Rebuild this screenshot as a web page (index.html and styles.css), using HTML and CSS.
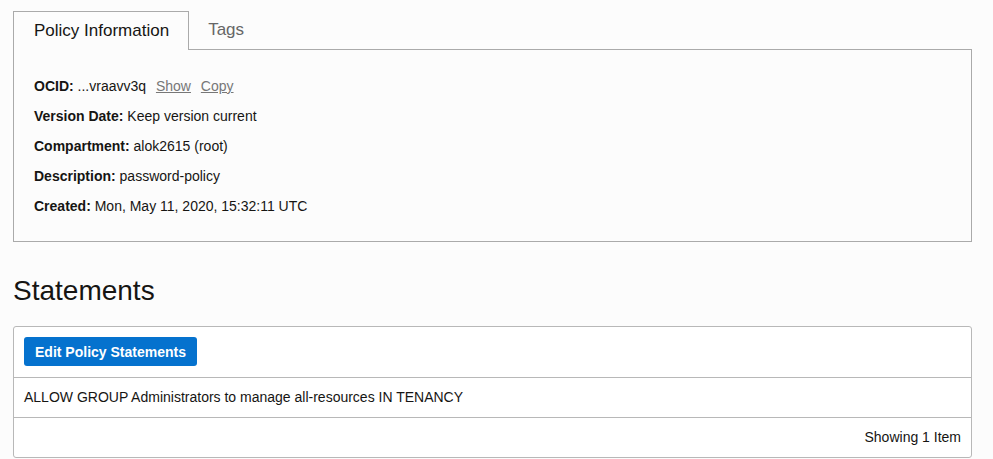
FILE: index.html
```html
<!DOCTYPE html>
<html>
<head>
<meta charset="utf-8">
<link rel="stylesheet" href="styles.css">
</head>
<body>
<div class="page">
  <div class="tabs">
    <div class="tab active">Policy Information</div>
    <div class="tab">Tags</div>
    <div class="tab-fill"></div>
  </div>
  <div class="panel">
    <div class="row"><span class="lbl">OCID:</span> ...vraavv3q <a class="lnk">Show</a> <a class="lnk">Copy</a></div>
    <div class="row"><span class="lbl">Version Date:</span> Keep version current</div>
    <div class="row"><span class="lbl">Compartment:</span> alok2615 (root)</div>
    <div class="row"><span class="lbl">Description:</span> password-policy</div>
    <div class="row"><span class="lbl">Created:</span> Mon, May 11, 2020, 15:32:11 UTC</div>
  </div>
  <h2 class="heading">Statements</h2>
  <div class="table">
    <div class="toolbar"><button class="btn">Edit Policy Statements</button></div>
    <div class="stmt">ALLOW GROUP Administrators to manage all-resources IN TENANCY</div>
    <div class="foot">Showing 1 Item</div>
  </div>
</div>
</body>
</html>
```
FILE: styles.css
```css
html, body {
  margin: 0;
  padding: 0;
  background: #fcfcfc;
}
body {
  font-family: "Liberation Sans", Arial, sans-serif;
  color: #161513;
  font-size: 14px;
}
.page {
  padding: 11px 21px 0 13px;
}
.tabs {
  display: flex;
  height: 39px;
}
.tab {
  font-size: 17px;
  line-height: 37px;
  color: #666;
  padding: 0 19px;
  border-bottom: 1px solid #aaa;
  box-sizing: border-box;
  height: 39px;
  white-space: nowrap;
}
.tab.active {
  color: #161513;
  border: 1px solid #aaa;
  border-bottom: none;
  background: #fcfcfc;
  padding: 0 19px 0 20px;
}
.tab-fill {
  flex: 1;
  border-bottom: 1px solid #aaa;
}
.panel {
  border: 1px solid #aaa;
  border-top: none;
  height: 192px;
  box-sizing: border-box;
  padding: 28px 0 0 20px;
}
.row {
  line-height: 16px;
  height: 30px;
}
.lbl {
  font-weight: bold;
}
.lnk {
  color: #777;
  text-decoration: underline;
  margin-left: 6px;
}
.heading {
  font-size: 28px;
  font-weight: normal;
  margin: 33px 0 0 0;
  line-height: 32px;
  height: 51px;
}
.table {
  background: #fff;
  border: 1px solid #b8b8b8;
  border-radius: 3px;
  height: 132px;
  box-sizing: border-box;
}
.toolbar {
  padding: 10px 10px;
  height: 51px;
  box-sizing: border-box;
  border-bottom: 1px solid #b8b8b8;
}
.btn {
  font-family: "Liberation Sans", Arial, sans-serif;
  background: #0572ce;
  color: #fff;
  border: none;
  border-radius: 3px;
  font-weight: bold;
  font-size: 14px;
  height: 29px;
  width: 173px;
  padding: 0;
}
.stmt {
  height: 40px;
  line-height: 38px;
  padding: 0 0 0 10px;
  border-bottom: 1px solid #b8b8b8;
  box-sizing: border-box;
}
.foot {
  height: 39px;
  line-height: 39px;
  text-align: right;
  padding-right: 10px;
}
```
